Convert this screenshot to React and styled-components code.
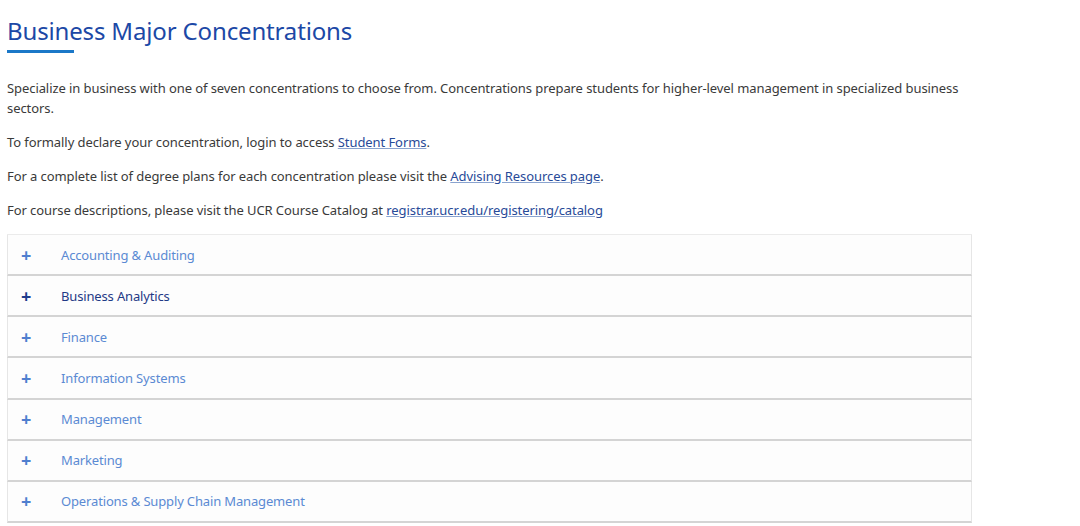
import React from 'react'
import styled, { createGlobalStyle } from 'styled-components'

const GlobalStyle = createGlobalStyle`
  body {
    margin: 0;
    background: #ffffff;
    font-family: "Noto Sans", "Open Sans", sans-serif;
  }
`

const items = [
  'Accounting & Auditing',
  'Business Analytics',
  'Finance',
  'Information Systems',
  'Management',
  'Marketing',
  'Operations & Supply Chain Management',
]

export default function App() {
  return (
    <>
      <GlobalStyle />
      <Page>
        <Title>Business Major Concentrations</Title>
        <Rule />
        <Text>
          Specialize in business with one of seven concentrations to choose from. Concentrations prepare students for
          higher-level management in specialized business sectors.
        </Text>
        <Text>
          To formally declare your concentration, login to access <Link href="#">Student Forms</Link>.
        </Text>
        <Text>
          For a complete list of degree plans for each concentration please visit the{' '}
          <Link href="#">Advising Resources page</Link>.
        </Text>
        <Text>
          For course descriptions, please visit the UCR Course Catalog at{' '}
          <Link href="#">registrar.ucr.edu/registering/catalog</Link>
        </Text>
        <Accordion>
          {items.map((name) => (
            <Row key={name}>
              <Plus active={name === 'Business Analytics'}>+</Plus>
              <Label active={name === 'Business Analytics'}>{name}</Label>
            </Row>
          ))}
        </Accordion>
      </Page>
    </>
  )
}

// styled components
const Page = styled.main`
  padding: 14px 108px 0 7px;
`

const Title = styled.h1`
  margin: 0;
  font-size: 24px;
  font-weight: 400;
  line-height: 34px;
  letter-spacing: -0.15px;
  color: #1c48a6;
`

const Rule = styled.div`
  width: 67px;
  height: 3px;
  margin: 2px 0 25px;
  background: #1b78c8;
`

const Text = styled.p`
  margin: 0 0 14px;
  font-size: 13px;
  line-height: 20px;
  letter-spacing: -0.08px;
  color: #3a3a3a;
`

const Link = styled.a`
  color: #284a98;
  text-decoration: underline;
  text-decoration-color: #8aa3cf;
`

const Accordion = styled.div`
  width: 965px;
  margin-top: 12px;
  border-top: 1px solid #ebebeb;
`

const Row = styled.div`
  display: flex;
  align-items: center;
  height: 39.15px;
  background: #fdfdfd;
  border-left: 1px solid #e6e6e6;
  border-right: 1px solid #e6e6e6;
  border-bottom: 2px solid #d4d4d4;
`

const Plus = styled.span`
  width: 53px;
  padding-left: 13px;
  box-sizing: border-box;
  font-size: 18px;
  font-weight: 700;
  color: ${(p) => (p.active ? '#1f3d8c' : '#4f7fcf')};
`

const Label = styled.span`
  font-size: 13px;
  letter-spacing: -0.15px;
  color: ${(p) => (p.active ? '#1f3a86' : '#5b8ad3')};
`
